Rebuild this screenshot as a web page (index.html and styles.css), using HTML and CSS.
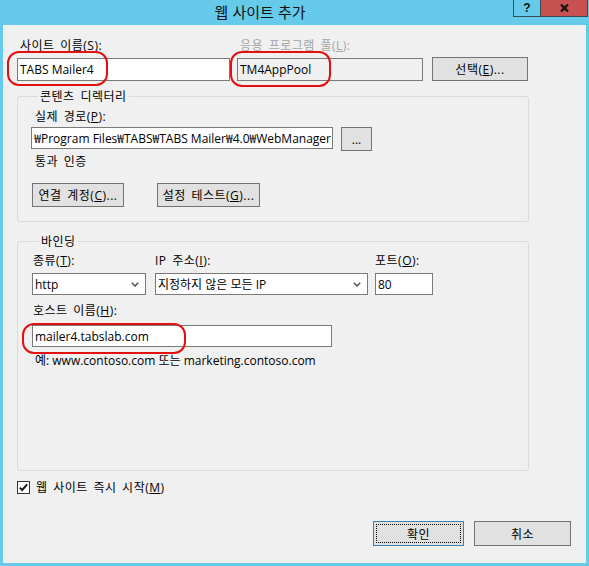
FILE: index.html
```html
<!DOCTYPE html>
<html lang="ko">
<head>
<meta charset="utf-8">
<title>웹 사이트 추가</title>
<link rel="stylesheet" href="styles.css">
</head>
<body>
<div class="window">
  <div class="titlebar">
    <div class="title">웹 사이트 추가</div>
    <div class="caption-btns">
      <div class="cap help">?</div>
      <div class="cap close">
        <svg width="9" height="8" viewBox="0 0 9 8"><path d="M1 0.5 L8 7.5 M8 0.5 L1 7.5" stroke="#111" stroke-width="2.2"/></svg>
      </div>
    </div>
  </div>
  <div class="client">
    <div class="row1">
      <div class="field f-site">
        <div class="label ko">사이트 이름(<u>S</u>):</div>
        <div class="input">TABS Mailer4</div>
      </div>
      <div class="field f-pool">
        <div class="label ko disabled">응용 프로그램 풀(<u>L</u>):</div>
        <div class="input readonly">TM4AppPool</div>
      </div>
      <button class="btn ko b-select">선택(<u>E</u>)...</button>
    </div>

    <fieldset class="group g1">
      <legend class="ko">콘텐츠 디렉터리</legend>
      <div class="label ko l-path">실제 경로(<u>P</u>):</div>
      <div class="path-row">
        <div class="input path"><span>₩Program Files₩TABS₩TABS Mailer₩4.0₩WebManager</span></div>
        <button class="btn b-dots">...</button>
      </div>
      <div class="label ko l-auth">통과 인증</div>
      <div class="auth-row">
        <button class="btn ko b-conn">연결 계정(<u>C</u>)...</button>
        <button class="btn ko b-test">설정 테스트(<u>G</u>)...</button>
      </div>
    </fieldset>

    <fieldset class="group g2">
      <legend class="ko">바인딩</legend>
      <div class="bind-row">
        <div class="field f-type">
          <div class="label ko l-type">종류(<u>T</u>):</div>
          <div class="input select"><span>http</span><svg class="chev" width="8" height="5" viewBox="0 0 8 5"><path d="M0.8 0.8 L4 4 L7.2 0.8" fill="none" stroke="#555" stroke-width="1.6"/></svg></div>
        </div>
        <div class="field f-ip">
          <div class="label ko l-ip">IP 주소(<u>I</u>):</div>
          <div class="input select"><span>지정하지 않은 모든 IP</span><svg class="chev" width="8" height="5" viewBox="0 0 8 5"><path d="M0.8 0.8 L4 4 L7.2 0.8" fill="none" stroke="#555" stroke-width="1.6"/></svg></div>
        </div>
        <div class="field f-port">
          <div class="label ko l-port">포트(<u>O</u>):</div>
          <div class="input port">80</div>
        </div>
      </div>
      <div class="label ko l-host">호스트 이름(<u>H</u>):</div>
      <div class="input host">mailer4.tabslab.com</div>
      <div class="label l-example">예: www.contoso.com 또는 marketing.contoso.com</div>
    </fieldset>

    <div class="check-row">
      <svg class="checkbox" width="13" height="13" viewBox="0 0 13 13"><rect x="0.5" y="0.5" width="12" height="12" fill="#fff" stroke="#333"/><path d="M2.8 6.6 L5.2 9 L10.2 3.4" fill="none" stroke="#1a1a1a" stroke-width="2"/></svg>
      <span class="check-label ko">웹 사이트 즉시 시작(<u>M</u>)</span>
    </div>

    <div class="footer">
      <button class="btn ko b-ok">확인</button>
      <button class="btn ko b-cancel">취소</button>
    </div>
  </div>

  <div class="mark m-site"></div>
  <div class="mark m-pool"></div>
  <div class="mark m-host"></div>
</div>
</body>
</html>
```

FILE: styles.css
```css
* { box-sizing: border-box; }
html, body { margin: 0; padding: 0; }
body {
  width: 589px;
  height: 566px;
  overflow: hidden;
  background: #66cbea;
  font-family: "Open Sans", "Noto Sans CJK KR", sans-serif;
  font-size: 12px;
  color: #000;
}
u { text-decoration: underline; text-underline-offset: 1px; }

.ko { letter-spacing: 0.5px; word-spacing: 2px; }

.window { position: relative; width: 589px; height: 566px; }

.titlebar {
  height: 25px;
  display: flex;
  align-items: flex-start;
}
.title {
  flex: 1;
  text-align: center;
  padding-left: 7px;
  font-family: "Noto Sans CJK KR", sans-serif;
  font-size: 15px;
  line-height: 23px;
  color: #111;
}
.caption-btns {
  display: flex;
  height: 17px;
  margin-right: 1px;
  border: 1px solid #3a4a52;
  border-top: none;
}
.cap {
  height: 16px;
  display: flex;
  align-items: center;
  justify-content: center;
}
.help {
  width: 27px;
  border-right: 1px solid #3a4a52;
  font-family: "Liberation Sans", sans-serif;
  font-weight: bold;
  font-size: 12px;
  color: #111;
}
.close {
  width: 46px;
  background: #c75050;
}

.client {
  margin: 0 3px;
  height: 538px;
  background: #f0f0f0;
  padding: 13px 0 0 14px;
}

.label {
  font-size: 12px;
  line-height: 16px;
  white-space: nowrap;
}
.label.disabled { color: #a3a3a3; }

.field { display: flex; flex-direction: column; }
.row1 { display: flex; align-items: flex-end; }
.row1 .label { padding-left: 3px; margin-bottom: 4px; }

.input {
  height: 23px;
  border: 1px solid #7a7a7a;
  background: #fff;
  display: flex;
  align-items: center;
  padding: 0 2px;
  font-size: 12px;
  white-space: nowrap;
  overflow: hidden;
}
.f-site { width: 213px; }
.f-pool { width: 186px; margin-left: 7px; }
.input.readonly { background: #f0f0f0; }

.btn {
  font-family: "Open Sans", "Noto Sans CJK KR", sans-serif;
  font-size: 12px;
  color: #000;
  background: #e1e1e1;
  border: 1px solid #737373;
  border-radius: 0;
  padding: 0;
  height: 24px;
  display: flex;
  align-items: center;
  justify-content: center;
  white-space: nowrap;
}
.b-select { width: 96px; margin-left: 9px; }

.group {
  margin: 0;
  padding: 0;
  border: 1px solid #d3dce2;
  border-radius: 3px;
  width: 512px;
  min-inline-size: 0;
}
.group legend {
  padding: 0 2px;
  margin-left: 7px;
  font-size: 12px;
  line-height: 16px;
  font-family: "Noto Sans CJK KR", sans-serif;
}

.g1 { margin-top: 7px; padding: 5px 12px 14px 13px; }
.l-path { padding-left: 4px; margin-bottom: 2px; }
.path-row { display: flex; align-items: flex-start; }
.input.path { width: 302px; height: 22px; justify-content: flex-end; padding: 0 1px; }
.b-dots { width: 31px; margin-left: 8px; }
.l-auth { padding-left: 4px; margin-top: 3px; }
.auth-row { display: flex; margin-top: 13px; }
.b-conn { width: 92px; margin-left: 1px; }
.b-test { width: 103px; margin-left: 33px; }

.g2 { margin-top: 11px; padding: 4px 12px 101px 14px; }
.bind-row { display: flex; align-items: flex-end; }
.bind-row .label { margin-bottom: 4px; }
.l-type { padding-left: 1px; }
.f-type { width: 114px; }
.f-ip { width: 213px; margin-left: 9px; }
.f-port { width: 58px; margin-left: 7px; }
.input.select { height: 22px; justify-content: space-between; padding: 0 6px 0 2px; }
.input.port { height: 22px; }
.l-host { padding-left: 1px; margin-top: 8px; margin-bottom: 6px; }
.input.host { width: 300px; height: 22px; }
.l-example { padding-left: 3px; margin-top: 6px; }

.check-row {
  display: flex;
  align-items: center;
  margin-top: 10px;
  height: 13px;
}
.checkbox { display: block; }
.check-label { margin-left: 6px; line-height: 16px; }

.footer {
  display: flex;
  justify-content: flex-end;
  gap: 10px;
  padding-right: 15px;
  margin-top: 27px;
}
.b-ok {
  width: 91px;
  height: 25px;
  border-color: #3c7fb1;
  outline: 1px dotted #000;
  outline-offset: -4px;
}
.b-cancel { width: 97px; height: 25px; }

.mark {
  position: absolute;
  border: 2px solid #e31010;
  border-radius: 12px;
}
.m-site { left: 7px; top: 51px; width: 101px; height: 35px; }
.m-pool { left: 230px; top: 51px; width: 101px; height: 36px; }
.m-host { left: 22px; top: 323px; width: 164px; height: 31px; }
```
